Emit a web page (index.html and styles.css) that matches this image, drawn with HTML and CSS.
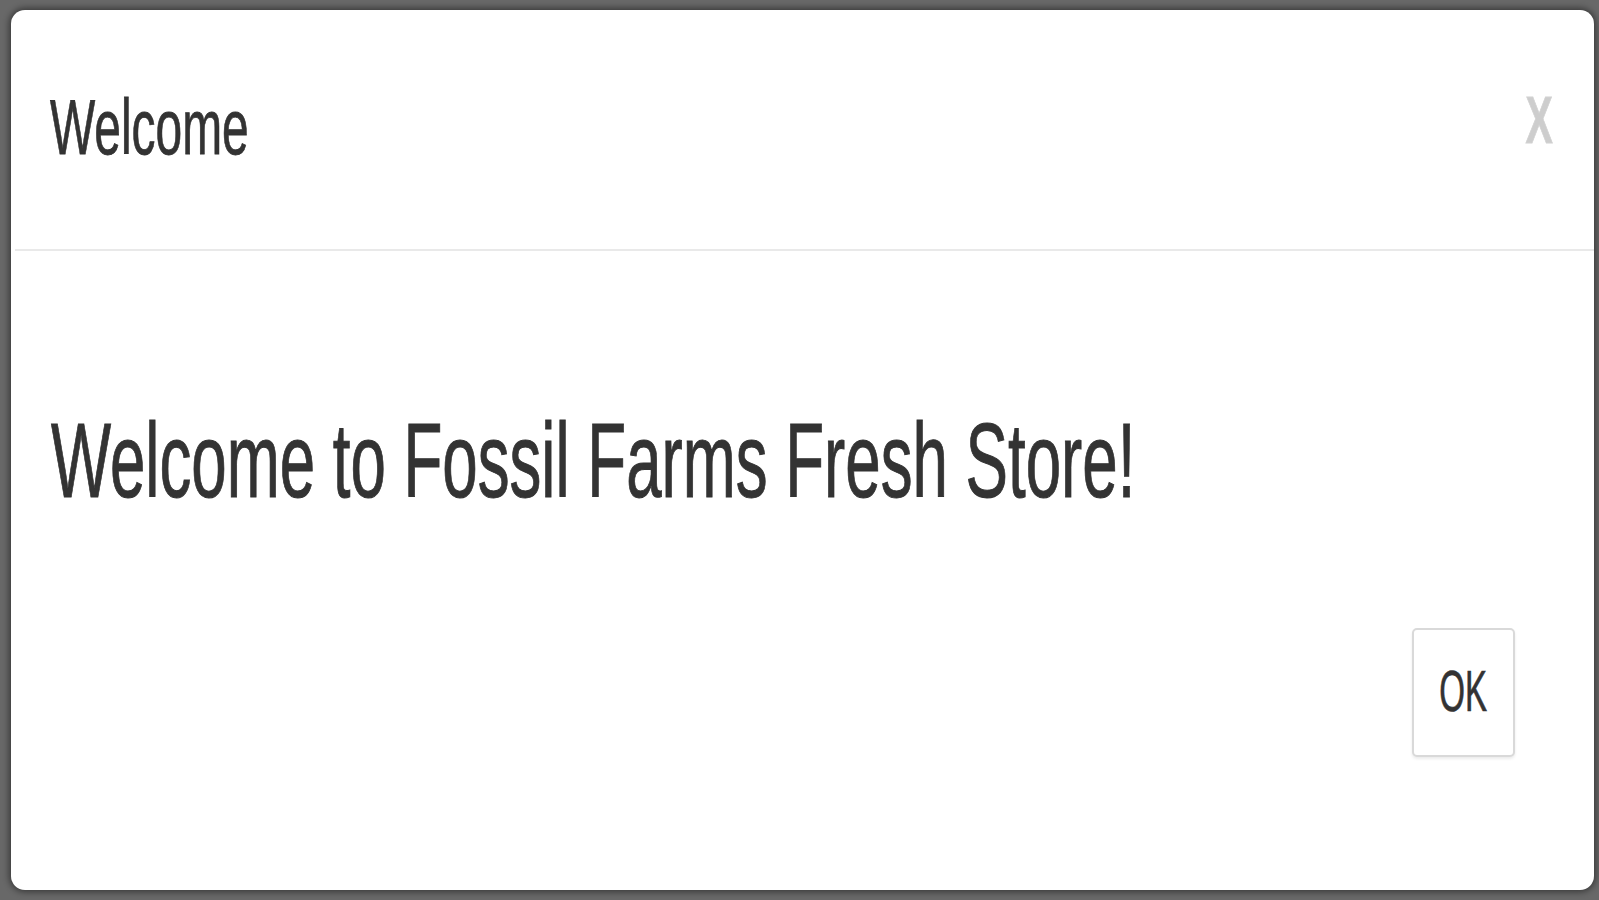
FILE: index.html
```html
<!DOCTYPE html>
<html lang="en">
<head>
<meta charset="utf-8">
<title>Welcome</title>
<link rel="stylesheet" href="styles.css">
</head>
<body>
  <div class="modal">
    <div class="modal-header">
      <h4 class="modal-title"><span class="squeeze left">Welcome</span></h4>
      <button class="close" type="button" aria-label="Close"><span class="squeeze right">X</span></button>
    </div>
    <div class="modal-body">
      <p class="message"><span class="squeeze left">Welcome to Fossil Farms Fresh Store!</span></p>
    </div>
    <div class="modal-footer">
      <button class="btn" type="button"><span class="squeeze center">OK</span></button>
    </div>
  </div>
</body>
</html>
```

FILE: styles.css
```css
html, body {
  margin: 0;
  padding: 0;
  overflow: hidden;
}

body {
  width: 1599px;
  height: 900px;
  background: #686868;
  font-family: "Liberation Sans", Arial, sans-serif;
  color: #333333;
  padding: 10px 5px 10px 11px;
  box-sizing: border-box;
}

.modal {
  width: 1583px;
  height: 880px;
  background: #ffffff;
  border-radius: 14px;
  box-shadow: 0 0 6px 2px rgba(0, 0, 0, 0.45);
  display: flex;
  flex-direction: column;
  overflow: hidden;
}

.squeeze {
  display: inline-block;
  white-space: nowrap;
  transform: scaleX(0.61);
}
.squeeze.left { transform-origin: left center; }
.squeeze.right { transform-origin: right center; }
.squeeze.center { transform-origin: center center; }

.modal-header {
  display: flex;
  justify-content: space-between;
  align-items: flex-start;
  padding: 79px 41px 83px 35px;
  border-bottom: 2px solid #e9e9e9;
  height: 77px;
  margin: 0 0 0 4px;
}

.modal-title {
  margin: 0;
  font-size: 77px;
  line-height: 77px;
  font-weight: normal;
  white-space: nowrap;
}

.modal-title .squeeze {
  transform: scaleX(0.622);
  -webkit-text-stroke: 0.8px #333333;
}

.close {
  margin: -3px 0 0 0;
  padding: 0;
  border: 0;
  background: transparent;
  font-family: "Liberation Sans", Arial, sans-serif;
  font-size: 67px;
  line-height: 67px;
  font-weight: bold;
  color: #cdcdcd;
  width: 28px;
  display: flex;
  justify-content: flex-end;
}

.close .squeeze {
  -webkit-text-stroke: 1px #d2d2d2;
}

.modal-body {
  padding: 157px 39px 0 40px;
}

.message {
  margin: 0;
  font-size: 105px;
  line-height: 105px;
  white-space: nowrap;
}

.message .squeeze {
  transform: scaleX(0.606);
  -webkit-text-stroke: 1px #333333;
}

.modal-footer {
  display: flex;
  justify-content: flex-end;
  padding: 115px 79px 0 0;
}

.btn {
  width: 103px;
  height: 129px;
  box-sizing: border-box;
  border: 2px solid #d9d9d9;
  border-radius: 5px;
  background: #ffffff;
  box-shadow: 0 2px 3px rgba(0, 0, 0, 0.08);
  padding: 33px 0 35px;
  font-family: "Liberation Sans", Arial, sans-serif;
  font-size: 57px;
  line-height: 57px;
  color: #333333;
  display: flex;
  justify-content: center;
  align-items: flex-start;
  overflow: visible;
}

.btn .squeeze {
  transform: scaleX(0.58);
  -webkit-text-stroke: 0.7px #333333;
}
```
